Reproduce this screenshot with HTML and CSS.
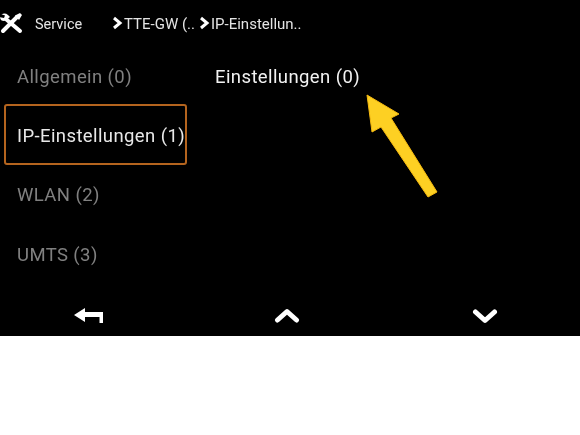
FILE: index.html
```html
<!DOCTYPE html>
<html lang="de">
<head>
    <meta charset="UTF-8">
    <title>Service</title>
    <link rel="stylesheet" href="styles.css">
</head>
<body>
    <div class="screen">
        <div class="topbar">
            <svg class="toolIcon" width="23" height="22" viewBox="0 0 23 22">
                <path d="M3 19 L17 5" class="toolStroke"/>
                <path d="M15 3.500 L20 1 L22 3 L19 8" fill="#fff"/>
                <path d="M3.500 5 L20 19" class="toolStroke"/>
                <path d="M0 5 C1 1.500 5 0.500 8 3 L10 5 L6 8 L4 9 C2 9 0 8 0 5 Z" fill="#fff"/>
                <path d="M-1 1.500 L5 3.500 L4 6 L-1 5 Z" fill="#000"/>
            </svg>
            <span class="crumb service">Service</span>
            <span class="crumb first">
                <svg class="sep" width="11" height="14" viewBox="0 0 11 14"><path d="M2 2 L8 7 L2 12" class="sepStroke"/></svg>TTE-GW (..
            </span>
            <span class="crumb">
                <svg class="sep" width="11" height="14" viewBox="0 0 11 14"><path d="M2 2 L8 7 L2 12" class="sepStroke"/></svg>IP-Einstellun..
            </span>
        </div>

        <div class="main">
            <ul class="menu">
                <li>Allgemein (0)</li>
                <li class="selected">IP-Einstellungen (1)</li>
                <li>WLAN (2)</li>
                <li>UMTS (3)</li>
            </ul>
            <div class="detail">Einstellungen (0)</div>
        </div>

        <div class="footer">
            <svg width="32" height="18" viewBox="0 0 32 18">
                <path d="M1 9 L12 2 L12 6 L30 6 L30 17 L26.500 17 L26.500 11 L12 11 L12 16 Z" fill="#fff"/>
            </svg>
            <svg class="navUp" width="26" height="16" viewBox="0 0 26 16">
                <path d="M3.500 13 L13 4.500 L22.500 13" class="navStroke"/>
            </svg>
            <svg class="navDown" width="26" height="16" viewBox="0 0 26 16">
                <path d="M3.500 3 L13 11.500 L22.500 3" class="navStroke"/>
            </svg>
        </div>

        <!-- yellow marker drawn over the screenshot -->
        <svg class="marker" width="90" height="120" viewBox="360 90 90 120">
            <path d="M367 95 L399 114 L391 118 L437 192 L428 197 L381 127 L372 132 Z" fill="#fdd023" stroke="#f5b90f" stroke-width="1"/>
        </svg>
    </div>
</body>
</html>
```

FILE: styles.css
```css
html, body {
    margin: 0;
    padding: 0;
    background: #fff;
}

.screen {
    position: relative;
    width: 580px;
    height: 336px;
    background: #000;
    color: #fff;
    font-family: Roboto, sans-serif;
    display: flex;
    flex-direction: column;
    overflow: hidden;
}

.topbar {
    height: 46px;
    display: flex;
    align-items: center;
    font-size: 15px;
    color: #e4e4e4;
    filter: blur(0.4px);
}

.toolIcon {
    flex: none;
}

.toolStroke {
    stroke: #fff;
    stroke-width: 4;
    stroke-linecap: round;
    fill: none;
}

.crumb {
    display: flex;
    align-items: center;
    white-space: nowrap;
    margin-top: 2px;
}

.service {
    margin-left: 12px;
    width: 77px;
    font-size: 14.500px;
}

.first {
    width: 87px;
}

.sep {
    flex: none;
    margin-right: 1px;
    margin-top: -2px;
}

.sepStroke {
    stroke: #fff;
    stroke-width: 3;
    fill: none;
}

.main {
    flex: 1;
    display: flex;
}

.menu {
    list-style: none;
    margin: 0;
    padding: 0 0 0 4px;
    width: 183px;
    font-size: 18.500px;
    letter-spacing: 0.4px;
    color: #808080;
    filter: blur(0.4px);
}

.menu li {
    height: 59.500px;
    box-sizing: border-box;
    display: flex;
    align-items: center;
    padding-left: 13px;
    padding-top: 2px;
    white-space: nowrap;
}

.menu .selected {
    height: 61px;
    margin-top: -2px;
    margin-bottom: 0;
    color: #e8e8e8;
    border: 2px solid #b4641e;
    border-radius: 3px;
    padding-left: 11px;
    padding-top: 4px;
}

.detail {
    margin-left: 28px;
    height: 62px;
    line-height: 62px;
    font-size: 18.500px;
    letter-spacing: 0.4px;
    color: #f2f2f2;
    white-space: nowrap;
    filter: blur(0.4px);
}

.footer {
    height: 46px;
    display: flex;
    justify-content: space-between;
    align-items: center;
    padding: 4px 82px 0 73px;
    box-sizing: border-box;
}

.navUp {
    margin-left: -2px;
    margin-right: 2px;
    margin-top: -1px;
}

.navDown {
    margin-top: 3px;
}

.navStroke {
    stroke: #fff;
    stroke-width: 5;
    stroke-linecap: round;
    stroke-linejoin: round;
    fill: none;
}

.marker {
    position: absolute;
    left: 360px;
    top: 90px;
}
```
